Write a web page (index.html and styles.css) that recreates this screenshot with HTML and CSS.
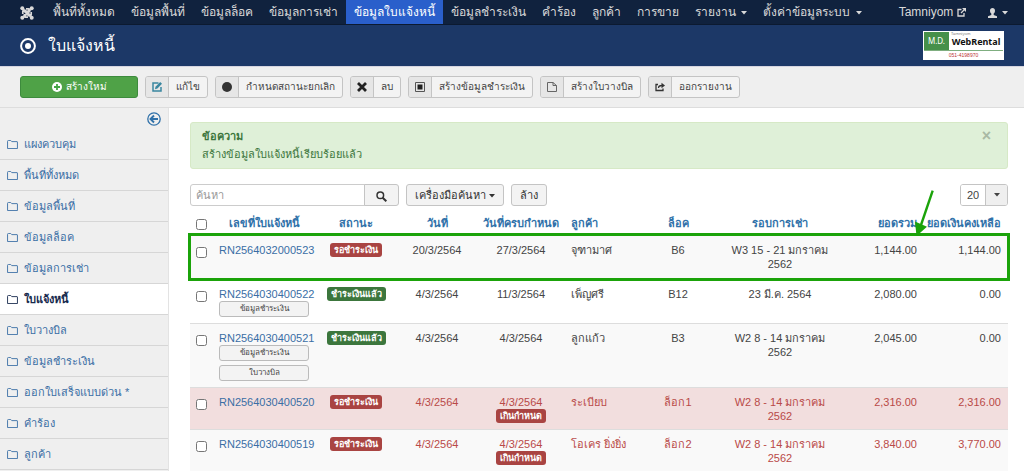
FILE: index.html
```html
<!DOCTYPE html>
<html lang="th">
<head>
<meta charset="utf-8">
<meta name="viewport" content="width=device-width, initial-scale=1">
<title>ใบแจ้งหนี้</title>
<link rel="stylesheet" href="styles.css">
</head>
<body>
<svg class="sprite" aria-hidden="true">
  <symbol id="folder" viewBox="0 0 12 10"><path d="M.5 9.500v-8q0-1 1-1H4l1.200 1.300h5.800q.5 0 .5.500v7.200z" fill="none" stroke="currentColor"/></symbol>
  <symbol id="caret" viewBox="0 0 6 4"><path d="M0 0h6L3 3.500z" fill="currentColor"/></symbol>
</svg>
<nav class="topnav" aria-label="เมนูหลัก">
  <a class="brand" href="#" aria-label="Joomla"><svg viewBox="0 0 14 14"><g fill="none" stroke="currentColor" stroke-width="1.700"><path d="M2.800 8V5.500Q3 3 5.500 4.500L11 10M11.200 6v2.500Q11 11 8.500 9.500L3 4M6 2.800h2.500Q11 3 9.500 5.500L4 11M8 11.200H5.500Q3 11 4.500 8.500L10 3"/></g><g fill="currentColor"><circle cx="2.300" cy="2.300" r="2"/><circle cx="11.700" cy="2.300" r="2"/><circle cx="2.300" cy="11.700" r="2"/><circle cx="11.700" cy="11.700" r="2"/></g></svg></a>
  <a href="#">พื้นที่ทั้งหมด</a>
  <a href="#">ข้อมูลพื้นที่</a>
  <a href="#">ข้อมูลล็อค</a>
  <a href="#">ข้อมูลการเช่า</a>
  <a class="active" href="#">ข้อมูลใบแจ้งหนี้</a>
  <a href="#">ข้อมูลชำระเงิน</a>
  <a href="#">คำร้อง</a>
  <a href="#">ลูกค้า</a>
  <a href="#">การขาย</a>
  <a href="#">รายงาน <svg class="caret"><use href="#caret"/></svg></a>
  <a href="#">ตั้งค่าข้อมูลระบบ <svg class="caret"><use href="#caret"/></svg></a>
  <a class="site" href="#">Tamniyom <svg class="ext" viewBox="0 0 9 9"><path d="M4.500 1.500H1v6.500h6V5M4 5l3.500-3.500" fill="none" stroke="currentColor" stroke-width="1.300"/><path d="M5 0h4v4z" fill="currentColor"/></svg></a>
  <a class="user" href="#" aria-label="ผู้ใช้"><svg class="person" viewBox="0 0 9 10"><path d="M4.500 0C6 0 7 1 7 2.800 7 4 6.500 5 5.700 5.600V7L9 8.300V10H0V8.300L3.300 7V5.600C2.500 5 2 4 2 2.800 2 1 3 0 4.500 0z" fill="currentColor"/></svg> <svg class="caret"><use href="#caret"/></svg></a>
</nav>
<header class="header">
  <svg class="target" viewBox="0 0 16 16"><circle cx="8" cy="8" r="6.900" fill="none" stroke="currentColor" stroke-width="2"/><circle cx="8" cy="8" r="3" fill="currentColor"/></svg>
  <h1>ใบแจ้งหนี้</h1>
  <div class="logo">
    <div class="logo-top"><span class="logo-md">M.D.</span><span class="logo-text"><small>Tamniyom</small><b>WebRental</b></span></div>
    <div class="logo-bottom">051-4198970</div>
  </div>
</header>
<div class="toolbar">
  <button class="new" type="button"><svg viewBox="0 0 10 10"><circle cx="5" cy="5" r="5" fill="#fff"/><path d="M5 2v6M2 5h6" stroke="#46a546" stroke-width="1.800"/></svg>สร้างใหม่</button>
  <button class="tool" type="button"><span class="ic"><svg viewBox="0 0 10 10"><path d="M6.500 1H1v8h8V5" fill="none" stroke="#3a87a0" stroke-width="1.500"/><path d="M3 7.200l.5-2.400L8.200 0 10 1.800 5.400 6.600z" fill="#3a87a0"/></svg></span><span class="tx">แก้ไข</span></button>
  <button class="tool" type="button"><span class="ic"><svg viewBox="0 0 10 10"><circle cx="5" cy="5" r="5" fill="#333"/></svg></span><span class="tx">กำหนดสถานะยกเลิก</span></button>
  <button class="tool" type="button"><span class="ic"><svg viewBox="0 0 10 10"><path d="M1 1l8 8M9 1L1 9" stroke="#222" stroke-width="2.800"/></svg></span><span class="tx">ลบ</span></button>
  <button class="tool" type="button"><span class="ic"><svg viewBox="0 0 10 10"><path d="M.5.5h9v9h-9z" fill="none" stroke="#555"/><path d="M2.500 2.500h5v5h-5z" fill="#222"/></svg></span><span class="tx">สร้างข้อมูลชำระเงิน</span></button>
  <button class="tool" type="button"><span class="ic"><svg viewBox="0 0 10 10"><path d="M.5.5h5.500L9.500 3.500v6h-9zM6 .5v3h3.500" fill="none" stroke="#666"/></svg></span><span class="tx">สร้างใบวางบิล</span></button>
  <button class="tool" type="button"><span class="ic"><svg viewBox="0 0 10 10"><path d="M3 2.500H1v6h7V6.500M3.500 6Q3.500 3.500 7 3.500" fill="none" stroke="#333" stroke-width="1.300"/><path d="M6.500.8l3.500 2.700-3.500 2.700z" fill="#333"/></svg></span><span class="tx">ออกรายงาน</span></button>
</div>
<div class="layout">
  <aside class="sidebar">
    <button class="collapse" type="button" aria-label="ซ่อนเมนู"><svg viewBox="0 0 14 14"><circle cx="7" cy="7" r="6.200" fill="none" stroke="currentColor" stroke-width="1.300"/><path d="M11 7H4M7 3.500L3.500 7 7 10.500" fill="none" stroke="currentColor" stroke-width="1.900"/></svg></button>
    <ul>
      <li><a href="#"><svg><use href="#folder"/></svg>แผงควบคุม</a></li>
      <li><a href="#"><svg><use href="#folder"/></svg>พื้นที่ทั้งหมด</a></li>
      <li><a href="#"><svg><use href="#folder"/></svg>ข้อมูลพื้นที่</a></li>
      <li><a href="#"><svg><use href="#folder"/></svg>ข้อมูลล็อค</a></li>
      <li><a href="#"><svg><use href="#folder"/></svg>ข้อมูลการเช่า</a></li>
      <li class="current"><a href="#"><svg><use href="#folder"/></svg>ใบแจ้งหนี้</a></li>
      <li><a href="#"><svg><use href="#folder"/></svg>ใบวางบิล</a></li>
      <li><a href="#"><svg><use href="#folder"/></svg>ข้อมูลชำระเงิน</a></li>
      <li><a href="#"><svg><use href="#folder"/></svg>ออกใบเสร็จแบบด่วน *</a></li>
      <li><a href="#"><svg><use href="#folder"/></svg>คำร้อง</a></li>
      <li><a href="#"><svg><use href="#folder"/></svg>ลูกค้า</a></li>
    </ul>
  </aside>
  <main class="main">
    <div class="alert" role="status">
      <div><h2>ข้อความ</h2><p>สร้างข้อมูลใบแจ้งหนี้เรียบร้อยแล้ว</p></div>
      <button type="button" aria-label="ปิด">×</button>
    </div>
    <form class="filters">
      <div class="search">
        <input type="text" placeholder="ค้นหา" aria-label="ค้นหา">
        <button type="button" aria-label="ค้นหา"><svg viewBox="0 0 11 11"><circle cx="4.300" cy="4.300" r="3.300" fill="none" stroke="#333" stroke-width="1.500"/><path d="M6.700 6.700l3.600 3.600" stroke="#333" stroke-width="2"/></svg></button>
      </div>
      <button class="btn" type="button">เครื่องมือค้นหา <svg class="caret"><use href="#caret"/></svg></button>
      <button class="btn" type="button">ล้าง</button>
      <div class="limit">
        <select aria-label="จำนวนรายการ"><option>20</option></select>
        <span><svg class="caret"><use href="#caret"/></svg></span>
      </div>
    </form>
    <div class="table-wrap">
    <table>
      <colgroup><col class="c-check"><col class="c-no"><col class="c-status"><col class="c-date"><col class="c-due"><col class="c-name"><col class="c-lot"><col class="c-period"><col class="c-sum"><col class="c-sum"></colgroup>
      <thead>
        <tr><th><input type="checkbox" aria-label="เลือกทั้งหมด"></th><th>เลขที่ใบแจ้งหนี้</th><th>สถานะ</th><th>วันที่</th><th>วันที่ครบกำหนด</th><th class="left">ลูกค้า</th><th>ล็อค</th><th>รอบการเช่า</th><th class="num">ยอดรวม</th><th class="num">ยอดเงินคงเหลือ</th></tr>
      </thead>
      <tbody>
        <tr class="odd marked"><td><input type="checkbox" aria-label="RN2564032000523"></td><td><a href="#">RN2564032000523</a></td><td><span class="badge red">รอชำระเงิน</span></td><td>20/3/2564</td><td>27/3/2564</td><td class="left">จุฑามาศ</td><td>B6</td><td>W3 15 - 21 มกราคม 2562</td><td class="num">1,144.00</td><td class="num">1,144.00</td></tr>
        <tr><td><input type="checkbox" aria-label="RN2564030400522"></td><td><a href="#">RN2564030400522</a><button class="mini" type="button">ข้อมูลชำระเงิน</button></td><td><span class="badge green">ชำระเงินแล้ว</span></td><td>4/3/2564</td><td>11/3/2564</td><td class="left">เพ็ญศรี</td><td>B12</td><td>23 มี.ค. 2564</td><td class="num">2,080.00</td><td class="num">0.00</td></tr>
        <tr class="odd"><td><input type="checkbox" aria-label="RN2564030400521"></td><td><a href="#">RN2564030400521</a><button class="mini" type="button">ข้อมูลชำระเงิน</button><button class="mini" type="button">ใบวางบิล</button></td><td><span class="badge green">ชำระเงินแล้ว</span></td><td>4/3/2564</td><td>4/3/2564</td><td class="left">ลูกแก้ว</td><td>B3</td><td>W2 8 - 14 มกราคม 2562</td><td class="num">2,045.00</td><td class="num">0.00</td></tr>
        <tr class="late error"><td><input type="checkbox" aria-label="RN2564030400520"></td><td><a href="#">RN2564030400520</a></td><td><span class="badge red">รอชำระเงิน</span></td><td>4/3/2564</td><td>4/3/2564<br><span class="badge red">เกินกำหนด</span></td><td class="left">ระเบียบ</td><td>ล็อก1</td><td>W2 8 - 14 มกราคม 2562</td><td class="num">2,316.00</td><td class="num">2,316.00</td></tr>
        <tr class="late odd"><td><input type="checkbox" aria-label="RN2564030400519"></td><td><a href="#">RN2564030400519</a></td><td><span class="badge red">รอชำระเงิน</span></td><td>4/3/2564</td><td>4/3/2564<br><span class="badge red">เกินกำหนด</span></td><td class="left">โอเคร ยิ่งยิ่ง</td><td>ล็อก2</td><td>W2 8 - 14 มกราคม 2562</td><td class="num">3,840.00</td><td class="num">3,770.00</td></tr>
      </tbody>
    </table>
    <svg class="arrow" viewBox="0 0 22 48" aria-hidden="true"><path d="M18.700 1.700L7 36" stroke="#1ba30a" stroke-width="2.400"/><path d="M1 32.500L13 37.700 2.500 47z" fill="#1ba30a"/></svg>
    </div>
  </main>
</div>
</body>
</html>
```

FILE: styles.css
```css
* { box-sizing: border-box; }
html { scrollbar-width: none; }
body {
  margin: 0;
  background: #fff;
  color: #444;
  font: 11px/14px "Liberation Sans", "Noto Sans", sans-serif;
}
a { color: #3a6ea5; text-decoration: none; }
button, input, select { font: inherit; color: inherit; margin: 0; }
svg { flex: none; }
.sprite { position: absolute; width: 0; height: 0; }
.caret { width: 6px; height: 4px; vertical-align: middle; }

.topnav {
  display: flex;
  height: 25px;
  padding-left: 12px;
  padding-right: 8px;
  background: #10223e;
  border-bottom: 1px solid #0c1a30;
  font-size: 12px;
  line-height: 24px;
  white-space: nowrap;
}
.topnav a { padding: 0 8px; color: #d9d9d9; }
.topnav .active { background: #2a5fcb; color: #fff; }
.topnav .brand { padding-right: 11px; }
.brand svg { width: 14px; height: 14px; vertical-align: middle; }
.topnav .caret { margin-left: 2px; }
.topnav .site { margin-left: auto; }
.ext { width: 9px; height: 9px; vertical-align: middle; }
.topnav .user { padding-left: 14px; }
.person { width: 9px; height: 10px; vertical-align: middle; }

.header {
  display: flex;
  align-items: center;
  height: 41px;
  padding: 0 20px;
  background: #1c3867;
  color: #fff;
}
.target { width: 16px; height: 16px; }
h1 { margin: 0 auto 0 12px; font-size: 16px; font-weight: 400; line-height: 24px; }
.logo { width: 81px; padding: 1px; background: #fff; font-family: "Noto Sans", sans-serif; }
.logo-top { display: flex; height: 19px; border-bottom: 1px solid #7fae80; }
.logo-md { width: 25px; background: #46904a; color: #fff; font-size: 8px; line-height: 18px; text-align: center; }
.logo-text { flex: 1; color: #111; }
.logo-text small { display: block; font-size: 4px; line-height: 4px; color: #777; padding-left: 2px; }
.logo-text b { display: block; font-size: 9px; line-height: 12px; text-align: center; }
.logo-bottom { height: 8px; color: #b33; font: 5px/8px "Liberation Sans", sans-serif; text-align: center; }

.toolbar {
  display: flex;
  gap: 7px;
  padding: 9px 20px;
  background: #efefef;
  border-top: 1px solid #d5d5e0;
  border-bottom: 1px solid #ddd;
  font-size: 10px;
}
.toolbar button { height: 22px; padding: 0; border-radius: 3px; white-space: nowrap; }
.toolbar svg { width: 10px; height: 10px; }
.new {
  display: flex;
  align-items: center;
  justify-content: center;
  gap: 4px;
  width: 118px;
  background: #4fa247;
  border: 1px solid #3d8b3d;
  color: #fff;
}
.tool { display: flex; background: #f3f3f3; border: 1px solid #c4c4c4; overflow: hidden; }
.ic { display: grid; place-items: center; width: 23px; height: 20px; background: #e6e6e6; border-right: 1px solid #c4c4c4; }
.tx { padding: 0 7px; line-height: 20px; }

.layout { display: flex; }
.sidebar { flex: none; width: 169px; background: #efefef; border-right: 1px solid #e3e3e3; }
.collapse { display: block; margin: 4px 7px 3px auto; padding: 0; width: 14px; height: 14px; border: 0; background: none; color: #3071a9; }
.collapse svg { display: block; }
.sidebar ul { list-style: none; margin: 0; padding: 0; }
.sidebar li { border-bottom: 1px solid #d6d6d6; }
.sidebar a { display: flex; align-items: center; gap: 6px; height: 30px; padding: 0 7px; }
.sidebar li svg { width: 11px; height: 9px; }
.current { background: #fff; font-weight: 700; }
.current a { color: #16294d; }

.main { flex: 1; min-width: 0; padding: 14px 16px 0 21px; }
.alert {
  display: flex;
  justify-content: space-between;
  align-items: flex-start;
  padding: 6px 16px 6px 11px;
  border: 1px solid #d6e9c6;
  border-radius: 3px;
  background: #dff0d8;
  color: #3c763d;
}
.alert h2 { margin: 0; font-size: 11px; line-height: 14px; }
.alert p { margin: 4px 0 0; line-height: 15px; }
.alert button { padding: 0; border: 0; background: none; color: #a9b9a4; font-size: 16px; font-weight: 700; line-height: 14px; }

.filters { display: flex; gap: 7px; margin-top: 15px; }
.search { display: flex; width: 209px; }
.search input { flex: 1; min-width: 0; height: 22px; padding: 0 5px; border: 1px solid #ccc; border-radius: 3px 0 0 3px; }
.search input::placeholder { color: #999; }
.search button { width: 35px; height: 22px; margin-left: -1px; padding: 0; border: 1px solid #c4c4c4; border-radius: 0 3px 3px 0; background: #f3f3f3; }
.search svg { width: 11px; height: 11px; vertical-align: middle; }
.btn { height: 22px; padding: 0 8px; border: 1px solid #c4c4c4; border-radius: 3px; background: #f3f3f3; color: #333; }
.limit { display: flex; width: 48px; height: 22px; margin-left: auto; border: 1px solid #c4c4c4; border-radius: 3px; overflow: hidden; }
.limit select { appearance: none; flex: 1; min-width: 0; padding: 0 6px; border: 0; background: #fff; }
.limit span { display: grid; place-items: center; width: 22px; border-left: 1px solid #c4c4c4; background: #efefef; }

.table-wrap { position: relative; }
table { width: 100%; table-layout: fixed; border-collapse: collapse; }
.c-check { width: 23px; }
.c-no { width: 102px; }
.c-status { width: 82px; }
.c-date { width: 80px; }
.c-due { width: 88px; }
.c-name { width: 71px; }
.c-lot { width: 84px; }
.c-sum { width: 84px; }
th { height: 29px; padding: 5px 0 0; color: #3071a9; white-space: nowrap; }
td { padding: 7px 6px 6px; border-top: 1px solid #ddd; text-align: center; vertical-align: top; }
th:first-child, td:first-child { padding-left: 0; padding-right: 0; }
th.left, td.left { text-align: left; padding-left: 6px; padding-right: 0; }
th.num, td.num { text-align: right; padding-right: 7px; }
td a { display: block; }
td input, th input { display: block; width: 11px; height: 11px; margin: 4px auto 0; }
.odd { background: #f9f9f9; }
.error { background: #f2dede; }
.late { color: #b94a48; }
.marked { height: 44px; outline: 3px solid #1ba30a; outline-offset: -1px; }
.badge { display: inline-block; padding: 0 4px; border-radius: 3px; color: #fff; font-size: 9px; font-weight: 700; line-height: 14px; vertical-align: top; white-space: nowrap; }
.red { background: #a94442; }
.green { background: #3c763d; }
.mini { display: block; width: 100%; height: 16px; padding: 0; border: 1px solid #bbb; border-radius: 3px; background: #f3f3f3; font-size: 8px; line-height: 12px; }
.mini + .mini { margin-top: 4px; }
.arrow { position: absolute; top: -17px; right: 72px; width: 22px; height: 48px; }
```
